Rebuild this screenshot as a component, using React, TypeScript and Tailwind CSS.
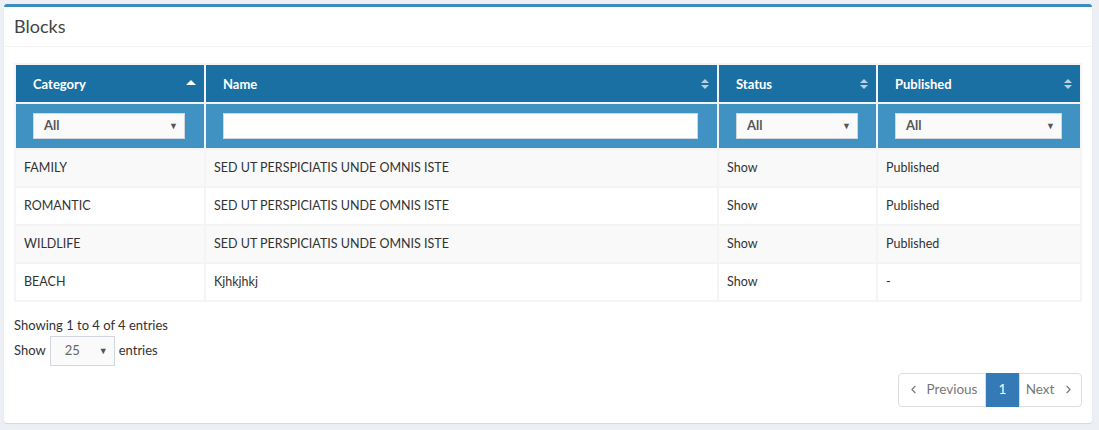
import { ChevronLeft, ChevronRight } from 'lucide-react'

const rows = [
  { category: 'FAMILY', name: 'SED UT PERSPICIATIS UNDE OMNIS ISTE', status: 'Show', published: 'Published' },
  { category: 'ROMANTIC', name: 'SED UT PERSPICIATIS UNDE OMNIS ISTE', status: 'Show', published: 'Published' },
  { category: 'WILDLIFE', name: 'SED UT PERSPICIATIS UNDE OMNIS ISTE', status: 'Show', published: 'Published' },
  { category: 'BEACH', name: 'Kjhkjhkj', status: 'Show', published: '-' },
]

function SortBoth() {
  return (
    <svg width="8" height="12" viewBox="0 0 8 12" className="text-[#b9d0e2]">
      <path d="M0 5 L4 1 L8 5 Z" fill="currentColor" />
      <path d="M0 7 L4 11 L8 7 Z" fill="currentColor" />
    </svg>
  )
}

function SortUp() {
  return (
    <svg width="10" height="8" viewBox="0 0 10 8" className="text-white">
      <path d="M0 6 L5 1 L10 6 Z" fill="currentColor" />
    </svg>
  )
}

function FakeSelect({ width }: { width: string }) {
  return (
    <div className={`${width} h-[26px] bg-[#fafafa] border border-[#d2d6de] flex items-center justify-between pl-[10px] pr-[6px]`}>
      <span className="text-[13px] font-bold text-[#555]">All</span>
      <span className="text-[9px] text-[#555]">▼</span>
    </div>
  )
}

export default function App() {
  const th = 'border-2 border-[#f4f4f4] bg-[#1a6fa3] text-white text-[13px] font-bold text-left h-[39px] px-[17px] pt-[2px] relative'
  const tf = 'border-2 border-[#f4f4f4] bg-[#3f92c2] h-[46px] px-[17px]'
  const td = 'border-2 border-[#f4f4f4] h-[38px] px-[8px] text-[12.5px] text-[#333]'

  return (
    <div className="min-h-screen bg-[#ecf0f5] pl-[4px] pr-[7px] pt-[4px]" style={{ fontFamily: 'Lato, "Open Sans", sans-serif' }}>
      <div className="bg-white border-t-[3px] border-[#3c8dbc] rounded-[3px] shadow-[0_1px_1px_rgba(0,0,0,0.1)]">
        <div className="px-[10px] h-[40px] flex items-center border-b border-[#f4f4f4]">
          <h3 className="text-[18px] text-[#444]">Blocks</h3>
        </div>
        <div className="px-[10px] pt-[16px] pb-[16px]">
          <table className="w-full table-fixed border-collapse">
            <colgroup>
              <col className="w-[190px]" />
              <col className="w-[513px]" />
              <col className="w-[159px]" />
              <col />
            </colgroup>
            <thead>
              <tr>
                <th className={th}>
                  Category
                  <span className="absolute right-[8px] top-[14px]"><SortUp /></span>
                </th>
                <th className={th}>
                  Name
                  <span className="absolute right-[8px] top-[13px]"><SortBoth /></span>
                </th>
                <th className={th}>
                  Status
                  <span className="absolute right-[8px] top-[13px]"><SortBoth /></span>
                </th>
                <th className={th}>
                  Published
                  <span className="absolute right-[8px] top-[13px]"><SortBoth /></span>
                </th>
              </tr>
              <tr>
                <td className={tf}><FakeSelect width="w-[152px]" /></td>
                <td className={tf}>
                  <div className="w-[475px] h-[26px] bg-white border border-[#d2d6de]" />
                </td>
                <td className={tf}><FakeSelect width="w-[122px]" /></td>
                <td className={tf}><FakeSelect width="w-[167px]" /></td>
              </tr>
            </thead>
            <tbody>
              {rows.map((r, i) => (
                <tr key={r.category} className={i % 2 === 0 ? 'bg-[#f9f9f9]' : 'bg-white'}>
                  <td className={td}>{r.category}</td>
                  <td className={td}>{r.name}</td>
                  <td className={td}>{r.status}</td>
                  <td className={td}>{r.published}</td>
                </tr>
              ))}
            </tbody>
          </table>

          <div className="mt-[14px] text-[13px] text-[#333]">Showing 1 to 4 of 4 entries</div>
          <div className="flex items-center gap-[4px] text-[13px] text-[#333]">
            <span>Show</span>
            <div className="w-[65px] h-[30px] bg-[#fafafa] border border-[#d2d6de] flex items-center justify-between pl-[14px] pr-[6px]">
              <span className="text-[13px] text-[#666]">25</span>
              <span className="text-[9px] text-[#555]">▼</span>
            </div>
            <span>entries</span>
          </div>

          <div className="flex justify-end mt-[7px]">
            <div className="flex h-[34px] text-[13.5px]">
              <div className="w-[88px] flex items-center justify-center gap-[7px] border border-[#ddd] rounded-l-[4px] text-[#777]">
                <ChevronLeft size={13} strokeWidth={2} />
                <span>Previous</span>
              </div>
              <div className="flex items-center justify-center w-[33px] bg-[#337ab7] text-white">1</div>
              <div className="w-[63px] flex items-center justify-center gap-[8px] border border-[#ddd] rounded-r-[4px] text-[#777]">
                <span>Next</span>
                <ChevronRight size={13} strokeWidth={2} />
              </div>
            </div>
          </div>
        </div>
      </div>
    </div>
  )
}
